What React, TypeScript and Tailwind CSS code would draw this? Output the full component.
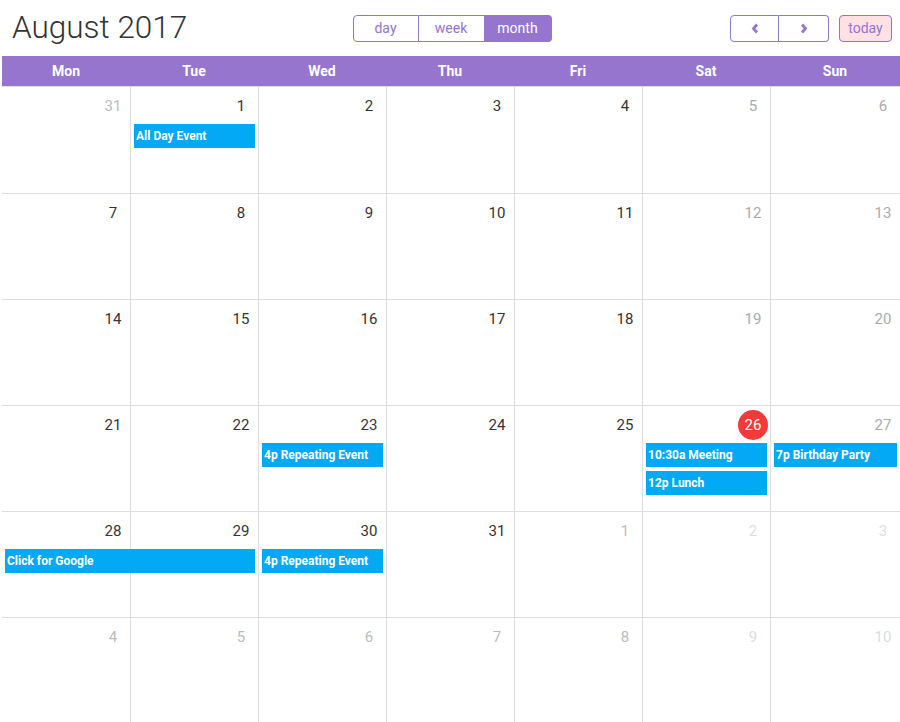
import React from "react";

type Ev = { col: number; span: number; row: number; time?: string; title: string };

interface Week {
  days: { n: number; other?: boolean; today?: boolean }[];
  events: Ev[];
}

const weeks: Week[] = [
  {
    days: [{ n: 31, other: true }, { n: 1 }, { n: 2 }, { n: 3 }, { n: 4 }, { n: 5 }, { n: 6 }],
    events: [{ col: 2, span: 1, row: 1, title: "All Day Event" }],
  },
  { days: [7, 8, 9, 10, 11, 12, 13].map((n) => ({ n })), events: [] },
  { days: [14, 15, 16, 17, 18, 19, 20].map((n) => ({ n })), events: [] },
  {
    days: [{ n: 21 }, { n: 22 }, { n: 23 }, { n: 24 }, { n: 25 }, { n: 26, today: true }, { n: 27 }],
    events: [
      { col: 3, span: 1, row: 1, time: "4p", title: "Repeating Event" },
      { col: 6, span: 1, row: 1, time: "10:30a", title: "Meeting" },
      { col: 7, span: 1, row: 1, time: "7p", title: "Birthday Party" },
      { col: 6, span: 1, row: 2, time: "12p", title: "Lunch" },
    ],
  },
  {
    days: [
      { n: 28 },
      { n: 29 },
      { n: 30 },
      { n: 31 },
      { n: 1, other: true },
      { n: 2, other: true },
      { n: 3, other: true },
    ],
    events: [
      { col: 1, span: 2, row: 1, title: "Click for Google" },
      { col: 3, span: 1, row: 1, time: "4p", title: "Repeating Event" },
    ],
  },
  { days: [4, 5, 6, 7, 8, 9, 10].map((n) => ({ n, other: true })), events: [] },
];

const colStart = ["", "col-start-1", "col-start-2", "col-start-3", "col-start-4", "col-start-5", "col-start-6", "col-start-7"];
const colSpan = ["", "col-span-1", "col-span-2"];
const rowStart = ["", "row-start-2", "row-start-3"];

const cols = "grid-cols-[repeat(6,128px)_1fr]";

function dayColor(i: number, other?: boolean) {
  const weekend = i >= 5;
  if (other) return weekend ? "text-[#dddddd]" : "text-[#bbbbbb]";
  return weekend ? "text-[#aaaaaa]" : "text-[#333333]";
}

function Chevron({ dir }: { dir: "l" | "r" }) {
  return (
    <svg width="8" height="11" viewBox="0 0 8 11" fill="none">
      <path
        d={dir === "l" ? "M6 1.5 L2.5 5.5 L6 9.5" : "M2 1.5 L5.5 5.5 L2 9.5"}
        stroke="#9575cd"
        strokeWidth="2.8"
        strokeLinejoin="miter"
      />
    </svg>
  );
}

export default function App() {
  return (
    <div className="w-[900px] h-[722px] overflow-hidden bg-white font-['Roboto',sans-serif]">
      {/* toolbar */}
      <div className="grid grid-cols-[1fr_auto_1fr] items-center h-[56px] pr-[8px]">
        <h2 className="pl-[12px] text-[31.5px] leading-[36px] font-light text-[#333333] -mt-[1px]">August 2017</h2>
        <div className="flex h-[27px] mt-[1px] ml-[12px] text-[14px]">
          <button className="w-[66px] border border-[#9575cd] rounded-l-[4px] text-[#9575cd]">day</button>
          <button className="w-[66px] border border-l-0 border-[#9575cd] text-[#9575cd]">week</button>
          <button className="w-[67px] border border-l-0 border-[#9575cd] rounded-r-[4px] bg-[#9575cd] text-white">
            month
          </button>
        </div>
        <div className="flex justify-end gap-[10px] mt-[1px]">
          <div className="flex h-[27px]">
            <button className="w-[49px] flex items-center justify-center border border-[#9575cd] rounded-l-[4px]">
              <Chevron dir="l" />
            </button>
            <button className="w-[50px] flex items-center justify-center border border-l-0 border-[#9575cd] rounded-r-[4px]">
              <Chevron dir="r" />
            </button>
          </div>
          <button className="w-[53px] h-[27px] border border-[#9575cd] rounded-[4px] bg-[#ffe0e3] text-[#9575cd] text-[14px]">
            today
          </button>
        </div>
      </div>

      {/* calendar */}
      <div className="ml-[2px] w-[898px]">
        <div className={`grid ${cols} h-[30px] bg-[#9575cd] text-white text-[14px] font-bold`}>
          {["Mon", "Tue", "Wed", "Thu", "Fri", "Sat", "Sun"].map((d) => (
            <div key={d} className="flex items-center justify-center">
              {d}
            </div>
          ))}
        </div>
        {weeks.map((w, wi) => (
          <div
            key={wi}
            className={`relative ${wi === 0 ? "h-[107px]" : "h-[106px]"} border-t border-[#dddddd]`}
          >
            <div className={`absolute inset-0 grid ${cols}`}>
              {w.days.map((_, i) => (
                <div key={i} className={i > 0 ? "border-l border-[#dddddd]" : ""} />
              ))}
            </div>
            <div className={`relative grid ${cols} auto-rows-min gap-y-[4px]`}>
              {w.days.map((d, i) => (
                <div key={i} className="row-start-1 flex justify-end items-start pr-[2px] pt-[4px] h-[33px]">
                  <span
                    className={`shrink-0 w-[30px] h-[30px] rounded-full flex items-center justify-center text-[15px] ${
                      d.today ? "bg-[#f4393a] text-white" : dayColor(i, d.other)
                    }`}
                  >
                    {d.n}
                  </span>
                </div>
              ))}
              {w.events.map((e, ei) => (
                <div
                  key={ei}
                  className={`${colStart[e.col]} ${colSpan[e.span]} ${rowStart[e.row]} ${
                    e.col === 1 ? "ml-[3px]" : "ml-[4px]"
                  } mr-[3px] h-[24px] bg-[#03a9f4] text-white text-[12px] font-bold leading-[24px] pl-[2px] whitespace-nowrap overflow-hidden`}
                >
                  {e.time && <span className="mr-[3px]">{e.time}</span>}
                  {e.title}
                </div>
              ))}
            </div>
          </div>
        ))}
      </div>
    </div>
  );
}
